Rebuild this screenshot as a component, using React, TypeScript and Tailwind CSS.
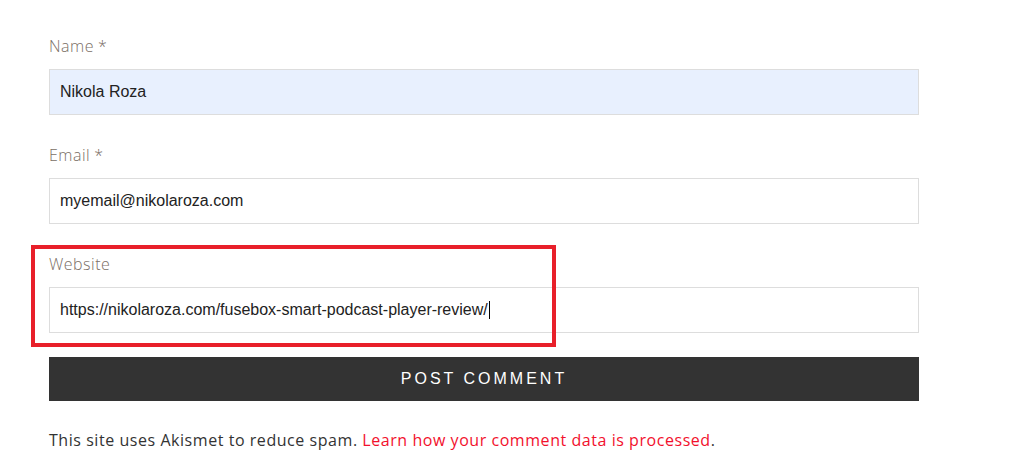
import React from 'react';

const labelFont = { fontFamily: '"Open Sans", "DejaVu Sans", sans-serif' };

function Field({ label, required, value, autofill, caret }: { label: string; required?: boolean; value: string; autofill?: boolean; caret?: boolean }) {
  return (
    <div className="mb-[28px]">
      <label className="block text-[16px] leading-[24px] font-light tracking-[0.5px] text-[#7a6e65] mb-[11px]" style={labelFont}>
        {label}
        {required && <span className="ml-[4px]">*</span>}
      </label>
      <div
        className={`h-[46px] border border-[#dddddd] flex items-center px-[10px] text-[16px] text-[#222] font-['Liberation_Sans',Arial,sans-serif] ${autofill ? 'bg-[#e8f0fe]' : 'bg-white'}`}
      >
        <span>{value}</span>
        {caret && <span className="inline-block w-px h-[18px] bg-black ml-px" />}
      </div>
    </div>
  );
}

export default function App() {
  return (
    <div className="relative w-[1027px] h-[455px] bg-white overflow-hidden">
      <div className="w-[870px] ml-[49px] pt-[34px]">
        <Field label="Name" required value="Nikola Roza" autofill />
        <Field label="Email" required value="myemail@nikolaroza.com" />
        <div className="-mb-[4px]">
          <Field label="Website" value="https://nikolaroza.com/fusebox-smart-podcast-player-review/" caret />
        </div>

        <button className="w-full h-[44px] bg-[#333333] text-white text-[16px] tracking-[3px] font-['Liberation_Sans',Arial,sans-serif]">
          POST COMMENT
        </button>

        <p className="mt-[27px] text-[16px] leading-[24px] tracking-[0.55px] text-[#333]" style={labelFont}>
          This site uses Akismet to reduce spam.{' '}
          <a href="#" className="text-[#f2112d]">Learn how your comment data is processed</a>.
        </p>
      </div>

      {/* annotation box */}
      <div className="absolute left-[31px] top-[245px] w-[525px] h-[102px] border-[4px] border-[#e8202a] pointer-events-none" />
    </div>
  );
}
